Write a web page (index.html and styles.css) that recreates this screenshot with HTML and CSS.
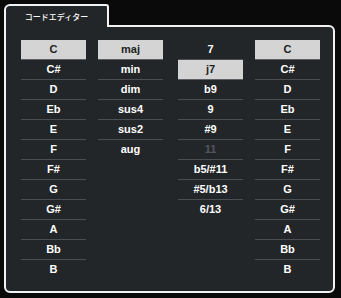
FILE: index.html
```html
<!DOCTYPE html>
<html lang="ja">

<head>
  <meta charset="UTF-8">
  <meta name="viewport" content="width=device-width, initial-scale=1.0">
  <title>コードエディター</title>
  <link rel="stylesheet" href="styles.css">
</head>

<body>
  <div class="editor">
    <div class="tab">コードエディター</div>

    <div class="panel">
      <ul class="col">
        <li class="sel">C</li>
        <li>C#</li>
        <li>D</li>
        <li>Eb</li>
        <li>E</li>
        <li>F</li>
        <li>F#</li>
        <li>G</li>
        <li>G#</li>
        <li>A</li>
        <li>Bb</li>
        <li>B</li>
      </ul>

      <ul class="col">
        <li class="sel">maj</li>
        <li>min</li>
        <li>dim</li>
        <li>sus4</li>
        <li>sus2</li>
        <li>aug</li>
      </ul>

      <ul class="col col-ext">
        <li>7</li>
        <li class="sel">j7</li>
        <li>b9</li>
        <li>9</li>
        <li>#9</li>
        <li class="off">11</li>
        <li>b5/#11</li>
        <li>#5/b13</li>
        <li>6/13</li>
      </ul>

      <!-- bass note -->
      <ul class="col">
        <li class="sel">C</li>
        <li>C#</li>
        <li>D</li>
        <li>Eb</li>
        <li>E</li>
        <li>F</li>
        <li>F#</li>
        <li>G</li>
        <li>G#</li>
        <li>A</li>
        <li>Bb</li>
        <li>B</li>
      </ul>
    </div>
  </div>
</body>

</html>
```

FILE: styles.css
```css
body {
  margin: 0;
  background-color: #0a0a0a;
  font-family: "Liberation Sans", Arial, sans-serif;
}

.editor {
  padding: 4px 6px 0 4px;
}

.tab {
  position: relative;
  z-index: 1;
  width: 101px;
  height: 21px;
  margin-bottom: -2px;
  border: 2px solid #f2f2f2;
  border-bottom: none;
  border-radius: 6px 3px 0 0;
  background-color: #232629;
  color: #fff;
  font-family: "Noto Sans CJK JP", sans-serif;
  font-size: 8px;
  font-weight: 500;
  line-height: 21px;
  text-align: center;
}

.panel {
  display: flex;
  align-items: flex-start;
  gap: 12px;
  height: 251px;
  padding: 13px 13px 0 15px;
  border: 2px solid #f2f2f2;
  border-radius: 0 6px 6px 6px;
  background-color: #232629;
}

.col {
  width: 65px;
  margin: 0;
  padding: 0;
  list-style: none;
}

.col-ext {
  margin-left: 3px;
}

.col li {
  height: 19px;
  border-bottom: 1px solid #4b4f53;
  color: #fff;
  font-size: 11px;
  font-weight: bold;
  line-height: 19px;
  text-align: center;
}

.col li:last-child {
  border-bottom-color: transparent;
}

.col li.sel {
  background-color: #d4d4d4;
  border-bottom-color: #5d6064;
  color: #1c1e20;
}

.col li.off {
  color: #50565c;
}
```
